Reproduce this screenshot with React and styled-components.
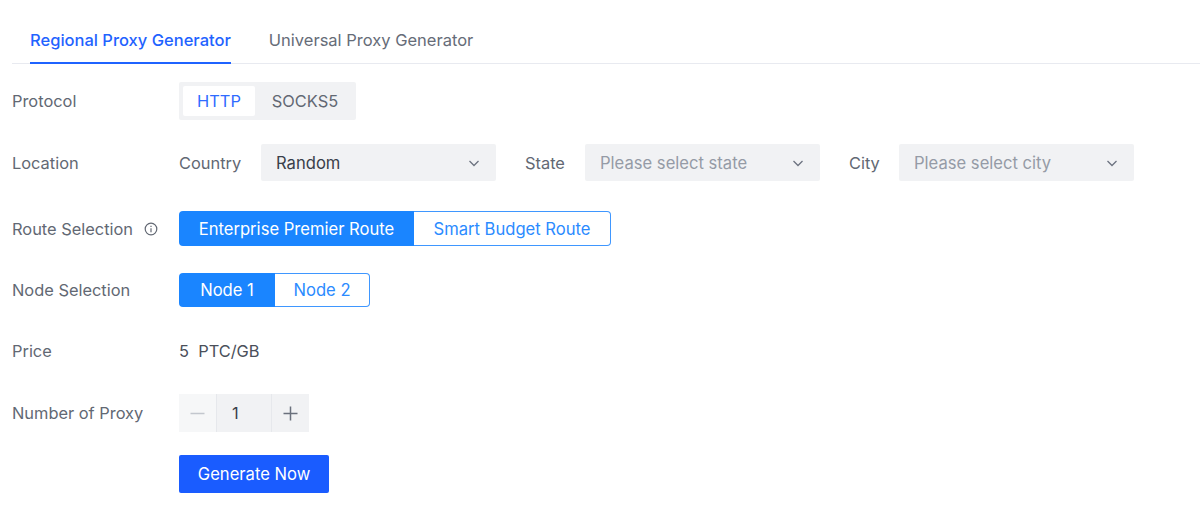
import React from 'react';
import styled, { createGlobalStyle, css } from 'styled-components';

const GlobalStyle = createGlobalStyle`
  html, body {
    margin: 0;
    background: #fff;
    font-family: Inter, "Liberation Sans", sans-serif;
  }
`;

const Page = styled.div`
  width: 1200px;
  height: 520px;
  padding-left: 12px;
  box-sizing: border-box;
  overflow: hidden;
  color: #5f6672;
  font-size: 16.4px;
`;

const Tabs = styled.div`
  display: flex;
  gap: 38px;
  height: 64px;
  box-sizing: border-box;
  padding: 0 0 0 18px;
  border-bottom: 1px solid #e8eaf0;
`;

const Tab = styled.div`
  display: flex;
  align-items: center;
  height: 64px;
  box-sizing: border-box;
  padding-top: 18px;
  font-size: 16.5px;
  font-weight: ${p => (p.$active ? 500 : 400)};
  color: ${p => (p.$active ? '#1f63ff' : '#666c78')};
  border-bottom: 2px solid ${p => (p.$active ? '#1f63ff' : 'transparent')};
`;

const Form = styled.div`
  display: flex;
  flex-direction: column;
  padding-top: 18px;
`;

const Row = styled.div`
  display: flex;
  align-items: center;
  height: ${p => p.$height || 38}px;
  margin-top: ${p => p.$top || 0}px;
`;

const Label = styled.div`
  display: flex;
  align-items: center;
  gap: 11px;
  width: 167px;
  flex-shrink: 0;
  color: #626873;
`;

const Segmented = styled.div`
  display: flex;
  height: 38px;
  box-sizing: border-box;
  padding: 4px;
  background: #f1f2f4;
  border-radius: 2px;
`;

const SegmentItem = styled.div`
  display: flex;
  align-items: center;
  justify-content: center;
  width: ${p => p.$width}px;
  box-sizing: border-box;
  padding-left: ${p => (p.$active ? 0 : 3)}px;
  border-radius: 2px;
  color: ${p => (p.$active ? '#2f6bff' : '#626873')};
  background: ${p => (p.$active ? '#fff' : 'transparent')};
`;

const FieldLabel = styled.span`
  color: #626873;
  margin-left: ${p => p.$left || 0}px;
  width: ${p => p.$width}px;
`;

const Select = styled.div`
  display: flex;
  align-items: center;
  justify-content: space-between;
  width: 235px;
  height: 37px;
  box-sizing: border-box;
  padding: 0 15px;
  background: #f1f2f4;
  border-radius: 2px;
  font-size: 16.6px;
  color: ${p => (p.$placeholder ? '#959ba6' : '#3a3f4a')};
`;

const Chevron = styled.svg`
  width: 14px;
  height: 14px;
  fill: none;
  stroke: #6d7380;
  stroke-width: 1.3;
`;

const ToggleGroup = styled.div`
  display: flex;
  height: ${p => p.$height}px;
  font-size: 16.6px;
`;

const ToggleButton = styled.div`
  display: flex;
  align-items: center;
  justify-content: center;
  width: ${p => p.$width}px;
  box-sizing: border-box;
  ${p =>
    p.$active
      ? css`
          background: #1a85ff;
          color: #fff;
          border-radius: 4px 0 0 4px;
        `
      : css`
          background: #fff;
          color: #2b8bff;
          border: 1px solid #3f97ff;
          border-left: none;
          border-radius: 0 4px 4px 0;
        `}
`;

const InfoIcon = styled.svg`
  width: 14px;
  height: 14px;
  fill: none;
  stroke: #626873;
  stroke-width: 1.2;
`;

const PriceValue = styled.span`
  color: #4a4f5a;
  white-space: pre;
`;

const Stepper = styled.div`
  display: flex;
  height: 38px;
  background: #f1f2f4;
`;

const StepButton = styled.div`
  display: flex;
  align-items: center;
  justify-content: center;
  width: 37px;
  background: ${p => (p.$disabled ? '#f6f7f8' : '#f1f2f4')};
  color: ${p => (p.$disabled ? '#c3c7ce' : '#6a707c')};
`;

const StepValue = styled.div`
  display: flex;
  align-items: center;
  width: 56px;
  box-sizing: border-box;
  padding-left: 15px;
  color: #3a3f4a;
  border-left: 1px solid #e6e8ec;
  border-right: 1px solid #e6e8ec;
`;

const StepIcon = styled.svg`
  width: 15px;
  height: 15px;
  margin-right: ${p => p.$shift || 0}px;
  stroke: currentColor;
  stroke-width: 1.5;
  fill: none;
`;

const PrimaryButton = styled.button`
  width: 150px;
  height: 38px;
  margin-left: 167px;
  padding: 0;
  border: none;
  border-radius: 2px;
  background: #1a5cff;
  color: #fff;
  font: inherit;
  font-size: 16.6px;
`;

const ChevronDown = () => (
  <Chevron viewBox="0 0 14 14">
    <path d="M2.5 5 L7 9.5 L11.5 5" />
  </Chevron>
);

export default function App() {
  return (
    <Page>
      <GlobalStyle />
      <Tabs>
        <Tab $active>Regional Proxy Generator</Tab>
        <Tab>Universal Proxy Generator</Tab>
      </Tabs>
      <Form>
        <Row>
          <Label>Protocol</Label>
          <Segmented>
            <SegmentItem $active $width={72}>HTTP</SegmentItem>
            <SegmentItem $width={97}>SOCKS5</SegmentItem>
          </Segmented>
        </Row>
        <Row $height={37} $top={24}>
          <Label>Location</Label>
          <FieldLabel $width={82}>Country</FieldLabel>
          <Select>Random<ChevronDown /></Select>
          <FieldLabel $left={29} $width={60}>State</FieldLabel>
          <Select $placeholder>Please select state<ChevronDown /></Select>
          <FieldLabel $left={29} $width={50}>City</FieldLabel>
          <Select $placeholder>Please select city<ChevronDown /></Select>
        </Row>
        <Row $height={35} $top={30}>
          <Label>
            Route Selection
            <InfoIcon viewBox="0 0 14 14">
              <circle cx="7" cy="7" r="5.8" />
              <path d="M7 6.2 V10.2 M7 3.8 V5" />
            </InfoIcon>
          </Label>
          <ToggleGroup $height={35}>
            <ToggleButton $active $width={235}>Enterprise Premier Route</ToggleButton>
            <ToggleButton $width={197}>Smart Budget Route</ToggleButton>
          </ToggleGroup>
        </Row>
        <Row $height={34} $top={27}>
          <Label>Node Selection</Label>
          <ToggleGroup $height={34}>
            <ToggleButton $active $width={96}>Node 1</ToggleButton>
            <ToggleButton $width={95}>Node 2</ToggleButton>
          </ToggleGroup>
        </Row>
        <Row $top={25}>
          <Label>Price</Label>
          <PriceValue>5  PTC/GB</PriceValue>
        </Row>
        <Row $top={24}>
          <Label>Number of Proxy</Label>
          <Stepper>
            <StepButton $disabled>
              <StepIcon viewBox="0 0 15 15"><path d="M0.5 7.5 H14.5" /></StepIcon>
            </StepButton>
            <StepValue>1</StepValue>
            <StepButton>
              <StepIcon $shift={1} viewBox="0 0 15 15"><path d="M0.5 7.5 H14.5 M7.5 0.5 V14.5" /></StepIcon>
            </StepButton>
          </Stepper>
        </Row>
        <Row $top={23}>
          <PrimaryButton>Generate Now</PrimaryButton>
        </Row>
      </Form>
    </Page>
  );
}
